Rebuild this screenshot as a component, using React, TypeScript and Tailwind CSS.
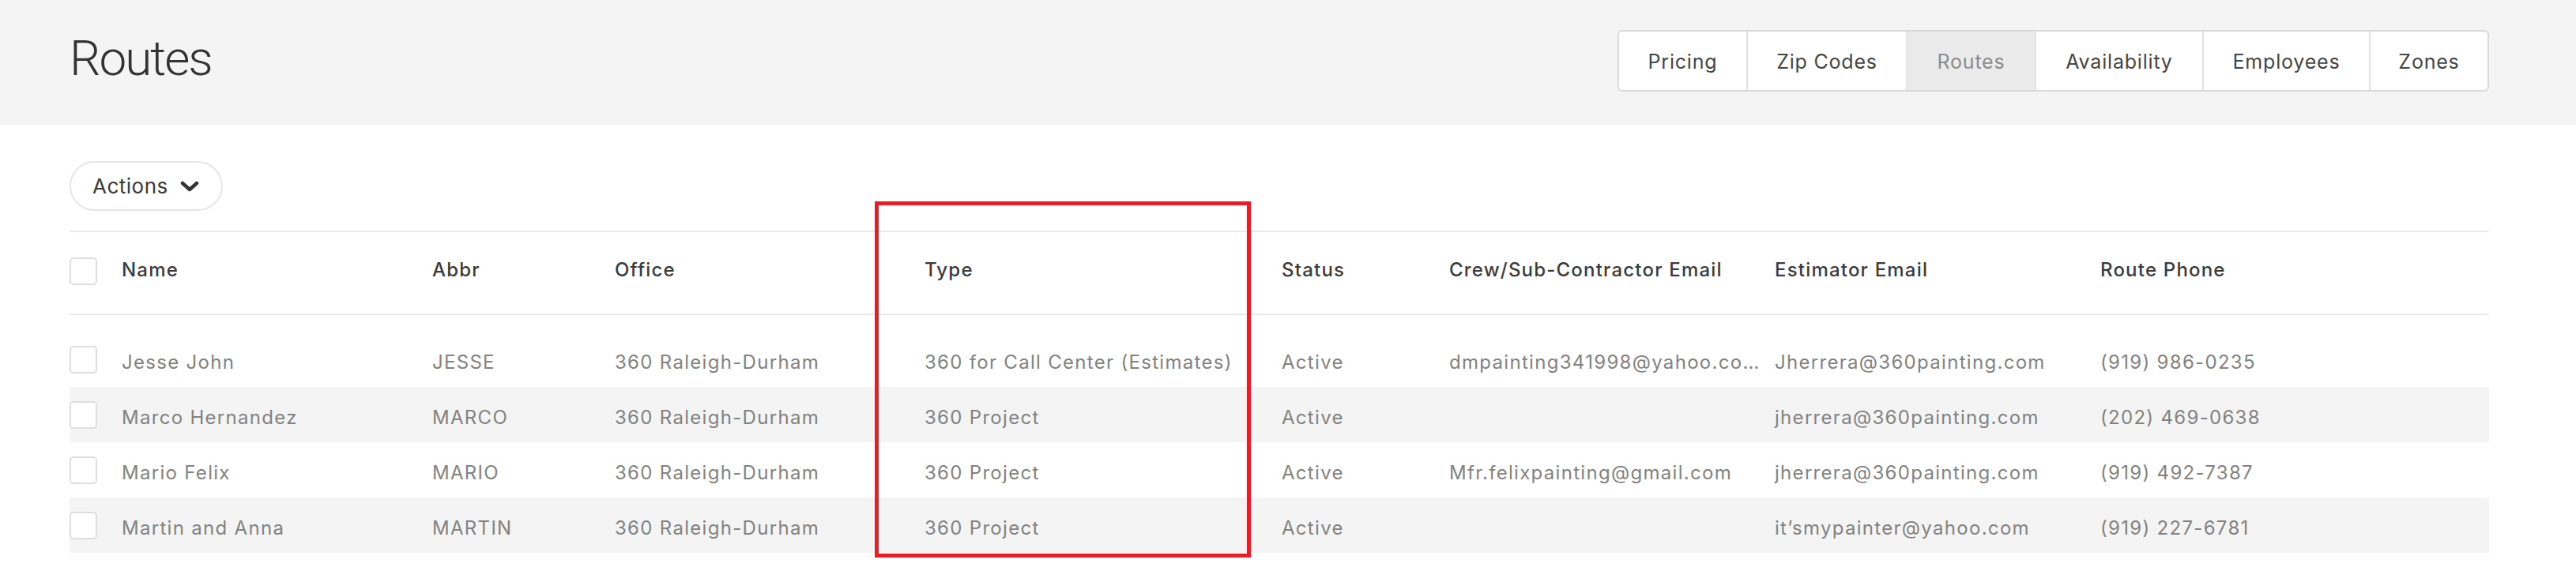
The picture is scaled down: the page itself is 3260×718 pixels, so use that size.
import React from 'react';

type Route = {
  name: string;
  abbr: string;
  office: string;
  type: string;
  status: string;
  crewEmail: string;
  estimatorEmail: string;
  phone: string;
};

const tabs = [
  { label: 'Pricing', width: 'w-[161px]' },
  { label: 'Zip Codes', width: 'w-[202px]' },
  { label: 'Routes', width: 'w-[163px]', active: true },
  { label: 'Availability', width: 'w-[212px]' },
  { label: 'Employees', width: 'w-[211px]' },
  { label: 'Zones', width: 'w-[150px]' },
];

const routes: Route[] = [
  {
    name: 'Jesse John',
    abbr: 'JESSE',
    office: '360 Raleigh-Durham',
    type: '360 for Call Center (Estimates)',
    status: 'Active',
    crewEmail: 'dmpainting341998@yahoo.co\u2026',
    estimatorEmail: 'Jherrera@360painting.com',
    phone: '(919) 986-0235',
  },
  {
    name: 'Marco Hernandez',
    abbr: 'MARCO',
    office: '360 Raleigh-Durham',
    type: '360 Project',
    status: 'Active',
    crewEmail: '',
    estimatorEmail: 'jherrera@360painting.com',
    phone: '(202) 469-0638',
  },
  {
    name: 'Mario Felix',
    abbr: 'MARIO',
    office: '360 Raleigh-Durham',
    type: '360 Project',
    status: 'Active',
    crewEmail: 'Mfr.felixpainting@gmail.com',
    estimatorEmail: 'jherrera@360painting.com',
    phone: '(919) 492-7387',
  },
  {
    name: 'Martin and Anna',
    abbr: 'MARTIN',
    office: '360 Raleigh-Durham',
    type: '360 Project',
    status: 'Active',
    crewEmail: '',
    estimatorEmail: 'it\u2019smypainter@yahoo.com',
    phone: '(919) 227-6781',
  },
];

const columns = [
  'Name',
  'Abbr',
  'Office',
  'Type',
  'Status',
  'Crew/Sub-Contractor Email',
  'Estimator Email',
  'Route Phone',
];

// shared column template for header and body rows
const gridCols =
  'grid grid-cols-[66px_393px_231px_392px_452px_212px_412px_412px_1fr] items-center';

const Checkbox = () => (
  <span className="block h-[35px] w-[35px] rounded-[5px] border-2 border-[#dedede] bg-white" />
);

const ChevronDown = () => (
  <svg viewBox="0 0 24 14" className="h-[14px] w-[24px]" fill="none">
    <polyline
      points="3,3 12,11 21,3"
      stroke="#333333"
      strokeWidth="4.5"
      strokeLinecap="round"
      strokeLinejoin="round"
    />
  </svg>
);

export default function App() {
  return (
    <div className="relative h-[718px] w-full overflow-hidden bg-white font-['Inter',sans-serif]">
      {/* Page header */}
      <header className="flex h-[158px] items-start justify-between bg-[#f4f4f4] pl-[88px] pr-[110px]">
        <h1 className="mt-[43px] font-['Roboto',sans-serif] text-[62px] font-light leading-none tracking-[-2px] text-[#333333]">
          Routes
        </h1>
        <nav className="mt-[38px] flex h-[78px] overflow-hidden rounded-[6px] border-2 border-[#d9d9d9] bg-white">
          {tabs.map((tab, i) => (
            <div
              key={tab.label}
              className={`flex items-center justify-center pt-[3px] text-[25px] tracking-[0.8px] ${tab.width} ${
                i > 0 ? 'border-l-2 border-[#e2e2e2]' : ''
              } ${tab.active ? 'bg-[#ebebeb] text-[#8c8c8c]' : 'text-[#454545]'}`}
            >
              {tab.label}
            </div>
          ))}
        </nav>
      </header>

      <main className="pl-[88px] pr-[110px]">
        {/* Bulk actions */}
        <button className="mt-[46px] flex h-[63px] w-[194px] items-center gap-[15px] rounded-full border-2 border-[#e6e6e6] bg-white pl-[27px] text-[26px] tracking-[0.5px] text-[#3a3a3a]">
          Actions
          <ChevronDown />
        </button>

        {/* Routes table */}
        <div className="mt-[25px] border-t-2 border-[#e9e9e9]">
          <div className={`${gridCols} h-[105px] border-b-2 border-[#e9e9e9] pb-[4px]`}>
            <Checkbox />
            {columns.map((col) => (
              <div
                key={col}
                className="pb-[3px] text-[24px] font-medium leading-none tracking-[1.2px] text-[#3b3b3b]"
              >
                {col}
              </div>
            ))}
          </div>

          <div className="h-[21px]" />

          {routes.map((r, i) => (
            <div
              key={r.abbr}
              className={`${gridCols} h-[70px] text-[24px] leading-none tracking-[1.3px] text-[#828282] ${
                i % 2 === 1 ? 'bg-[#f4f4f4]' : 'bg-white'
              }`}
            >
              <Checkbox />
              <div className="pt-[8px]">{r.name}</div>
              <div className="pt-[8px]">{r.abbr}</div>
              <div className="pt-[8px]">{r.office}</div>
              <div className="pt-[8px]">{r.type}</div>
              <div className="pt-[8px]">{r.status}</div>
              <div className="whitespace-nowrap pt-[8px]">{r.crewEmail}</div>
              <div className="pt-[8px]">{r.estimatorEmail}</div>
              <div className="pt-[8px]">{r.phone}</div>
            </div>
          ))}
        </div>
      </main>

      {/* Highlight around the Type column */}
      <div className="pointer-events-none absolute left-[1107px] top-[255px] h-[451px] w-[476px] border-[5px] border-[#ed1c24]" />
    </div>
  );
}
